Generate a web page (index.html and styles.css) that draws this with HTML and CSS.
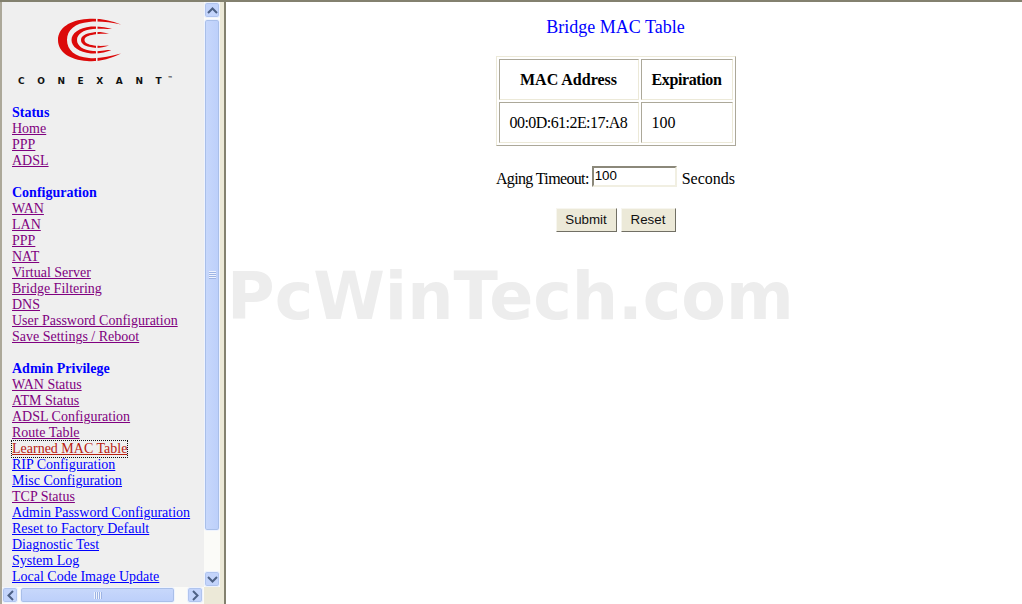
FILE: index.html
```html
<!DOCTYPE html>
<html lang="en">
<head>
  <meta charset="UTF-8">
  <title>Bridge MAC Table</title>
  <link rel="stylesheet" href="styles.css">
</head>
<body>

  <div class="frames">
    <!-- left frame -->
    <div class="side">
      <div class="side-top">
        <div class="nav">
          <div class="logo">
            <svg class="logo-mark" width="66" height="46" viewBox="0 0 66 46">
              <path class="red" d="M63 6.500C52 2 40 0 29 1C12 2 0 10 0 22C0 34 12 42 29 43C40 44 52 41 63 35.500C52 38.500 40 41 31 40C17 39 9 32 9 22C9 12 17 5 31 4C40 3 52 4 63 6.500Z"/>
              <path class="red" d="M56 11.500C48 9 40 8 33 8.500C21 10 13.500 15 13.500 22C13.500 29 21 34 33 35.500C40 36 48 34.500 56 31C48 32.500 40 33.500 35 33C25 32 19 28 19 22C19 16 25 12 35 11C40 10.500 48 10.500 56 11.500Z"/>
              <path class="red" d="M51 16C45 14 39 13.500 35 14.500C27 15.500 23 18 23 22C23 26 27 28.500 35 29.500C39 30.500 45 29.500 51 27.500C45 28 39 28 36 27.500C30 26.500 26.500 25 26.500 22C26.500 19 30 17.500 36 16.500C39 16 45 15.500 51 16Z"/>
              <rect class="slit" x="38" y="0" width="1.500" height="46"/>
              <rect class="slit" x="39" y="11" width="27" height="1"/>
              <rect class="slit" x="39" y="31" width="27" height="1"/>
            </svg>
            <div class="logo-name">CONEXAN<span class="logo-last">T</span><sup>™</sup></div>
          </div>

          <div class="group">
            <div class="group-title">Status</div>
            <a class="seen" href="#">Home</a>
            <a class="seen" href="#">PPP</a>
            <a class="seen" href="#">ADSL</a>
          </div>

          <div class="group">
            <div class="group-title">Configuration</div>
            <a class="seen" href="#">WAN</a>
            <a class="seen" href="#">LAN</a>
            <a class="seen" href="#">PPP</a>
            <a class="seen" href="#">NAT</a>
            <a class="seen" href="#">Virtual Server</a>
            <a class="seen" href="#">Bridge Filtering</a>
            <a class="seen" href="#">DNS</a>
            <a class="seen" href="#">User Password Configuration</a>
            <a class="seen" href="#">Save Settings / Reboot</a>
          </div>

          <div class="group">
            <div class="group-title">Admin Privilege</div>
            <a class="seen" href="#">WAN Status</a>
            <a class="seen" href="#">ATM Status</a>
            <a class="seen" href="#">ADSL Configuration</a>
            <a class="seen" href="#">Route Table</a>
            <a class="current" href="#">Learned MAC Table</a>
            <a href="#">RIP Configuration</a>
            <a href="#">Misc Configuration</a>
            <a class="seen" href="#">TCP Status</a>
            <a href="#">Admin Password Configuration</a>
            <a href="#">Reset to Factory Default</a>
            <a href="#">Diagnostic Test</a>
            <a href="#">System Log</a>
            <a href="#">Local Code Image Update</a>
          </div>
        </div>

        <div class="vbar">
          <div class="sb-btn"><svg width="11" height="7" viewBox="0 0 11 7"><path d="M1 6L5.500 1.500L10 6"/></svg></div>
          <div class="vbar-track">
            <div class="vbar-thumb"><span class="grip-v"></span></div>
          </div>
          <div class="sb-btn"><svg width="11" height="7" viewBox="0 0 11 7"><path d="M1 1L5.500 5.500L10 1"/></svg></div>
        </div>
      </div>

      <div class="hbar">
        <div class="sb-btn"><svg width="7" height="11" viewBox="0 0 7 11"><path d="M6 1L1.500 5.500L6 10"/></svg></div>
        <div class="hbar-track">
          <div class="hbar-thumb"><span class="grip-h"></span></div>
        </div>
        <div class="sb-btn"><svg width="7" height="11" viewBox="0 0 7 11"><path d="M1 1L5.500 5.500L1 10"/></svg></div>
        <div class="corner"></div>
      </div>
    </div>

    <!-- right frame -->
    <div class="main">
      <h1 class="title">Bridge MAC Table</h1>

      <table class="mac-table">
        <tr>
          <th class="col-mac">MAC Address</th>
          <th class="col-exp">Expiration</th>
        </tr>
        <tr>
          <td class="col-mac">00:0D:61:2E:17:A8</td>
          <td class="col-exp">100</td>
        </tr>
      </table>

      <form class="aging">
        <label class="aging-label" for="aging">Aging Timeout:</label>
        <input id="aging" class="aging-input" type="text" value="100">
        <span class="aging-unit">Seconds</span>
      </form>

      <div class="buttons">
        <button class="btn btn-submit" type="button">Submit</button>
        <button class="btn btn-reset" type="button">Reset</button>
      </div>

      <div class="watermark">PcWinTech.com</div>
    </div>
  </div>

</body>
</html>
```

FILE: styles.css
```css
* {
  box-sizing: border-box;
}

html, body {
  height: 100%;
}

body {
  margin: 0;
  overflow: hidden;
  background: #fff;
  font-family: "Liberation Serif", serif;
  font-size: 16px;
}

.frames {
  display: flex;
  height: 604px;
  border-top: 2px solid #83816f;
}

/* left frame */
.side {
  width: 226px;
  display: flex;
  flex-direction: column;
  background: #ece9d8;
  border-left: 2px solid #aca899;
  border-right: 2px solid #83816f;
}

.side-top {
  height: 585px;
  display: flex;
  margin-right: 4px;
}

.nav {
  width: 202px;
  padding-left: 10px;
  background: #efefef;
  overflow: hidden;
  font-size: 14px;
  line-height: 16px;
}

.logo {
  height: 103px;
  padding-top: 16px;
}

.logo-mark {
  display: block;
  margin-left: 46px;
}

.red {
  fill: #dc0a0a;
}

.slit {
  fill: #efefef;
}

.logo-name {
  margin: 12px 0 0 6px;
  white-space: nowrap;
  font-family: "DejaVu Sans", sans-serif;
  font-size: 9px;
  font-weight: bold;
  line-height: 10px;
  letter-spacing: 12.6px;
  color: #111;
}

.logo-last {
  letter-spacing: 6px;
}

.logo-name sup {
  font-size: 5px;
  letter-spacing: 0;
  line-height: 0;
}

.group {
  margin-bottom: 16px;
}

.group-title {
  font-weight: bold;
  color: #0000ff;
}

.nav a {
  display: block;
  width: fit-content;
  white-space: nowrap;
  color: #0000ff;
}

.nav a.seen {
  color: #800080;
}

.nav a.current {
  color: #b92010;
  outline: 1px dotted #111;
}

/* scrollbars */
.vbar {
  width: 16px;
  display: flex;
  flex-direction: column;
  background: #fbfbf8;
}

.vbar-track {
  flex: 1;
  padding: 1px 0;
}

.vbar-thumb {
  height: 512px;
  display: flex;
  align-items: center;
  justify-content: center;
  background: linear-gradient(to right, #c8d8fb, #bccffa);
  border: 1px solid #eef3fe;
  border-radius: 3px;
  box-shadow: 0 0 0 1px #a9bfe9 inset;
}

.grip-v {
  width: 7px;
  height: 8px;
  background: repeating-linear-gradient(to bottom, #eef3fe 0 1px, #9db4e4 1px 2px);
}

.sb-btn {
  width: 16px;
  height: 16px;
  flex: none;
  display: flex;
  align-items: center;
  justify-content: center;
  background: #c3d4fb;
  border: 1px solid #eef3fe;
  border-radius: 3px;
  box-shadow: 0 0 0 1px #b0c4ee inset;
}

.sb-btn svg {
  fill: none;
  stroke: #4d6185;
  stroke-width: 2;
}

.hbar {
  flex: 1;
  display: flex;
  background: #fbfbf8;
}

.hbar-track {
  width: 169px;
  padding: 0 0 0 2px;
}

.hbar-thumb {
  width: 155px;
  height: 16px;
  display: flex;
  align-items: center;
  justify-content: center;
  background: linear-gradient(to bottom, #c8d8fb, #bccffa);
  border: 1px solid #eef3fe;
  border-radius: 3px;
  box-shadow: 0 0 0 1px #a9bfe9 inset;
}

.grip-h {
  width: 8px;
  height: 7px;
  background: repeating-linear-gradient(to right, #eef3fe 0 1px, #9db4e4 1px 2px);
}

.corner {
  flex: 1;
  margin-left: 1px;
  background: #ece9d8;
}

/* right frame */
.main {
  position: relative;
  flex: 1;
  padding: 15px 17px 0 0;
  display: flex;
  flex-direction: column;
  align-items: center;
  background: #fff;
}

.title {
  margin: 0 0 18px;
  font-size: 18px;
  font-weight: normal;
  line-height: 21px;
  color: #0000ff;
}

.mac-table {
  border: 1px solid;
  border-color: #ece9d8 #aca899 #aca899 #ece9d8;
  border-spacing: 2px;
}

.mac-table th,
.mac-table td {
  height: 41px;
  padding: 0 10px;
  border: 1px solid;
  border-color: #aca899 #ece9d8 #ece9d8 #aca899;
}

.mac-table th.col-mac,
.mac-table td.col-mac {
  width: 140px;
}

.mac-table td.col-mac {
  letter-spacing: -0.55px;
}

.mac-table th.col-exp,
.mac-table td.col-exp {
  width: 92px;
}

.mac-table th.col-exp {
  letter-spacing: -0.4px;
}

.aging {
  margin-top: 20px;
  display: flex;
  align-items: flex-start;
  height: 22px;
}

.aging-label,
.aging-unit {
  margin-top: 4px;
}

.aging-label {
  letter-spacing: -0.65px;
}

.aging-input {
  width: 85px;
  height: 21px;
  margin: 0 5px 0 3px;
  padding: 0 1px 3px;
  border: 2px solid;
  border-color: #8b887a #f1efe2 #f1efe2 #8b887a;
  font-family: "Liberation Sans", sans-serif;
  font-size: 13.33px;
}

.buttons {
  margin-top: 20px;
  display: flex;
  gap: 4px;
}

.btn {
  height: 24px;
  padding: 0 0 2px;
  background: #ece9d8;
  border: 1px solid;
  border-color: #f7f6ef #716f64 #716f64 #f7f6ef;
  font-family: "Liberation Sans", sans-serif;
  font-size: 13.33px;
  color: #111;
}

.btn-submit {
  width: 61px;
}

.btn-reset {
  width: 55px;
}

.watermark {
  position: absolute;
  left: 1px;
  top: 257px;
  font-family: "DejaVu Sans", sans-serif;
  font-size: 65px;
  font-weight: bold;
  line-height: 76px;
  white-space: nowrap;
  color: #ededed;
  pointer-events: none;
}
```
